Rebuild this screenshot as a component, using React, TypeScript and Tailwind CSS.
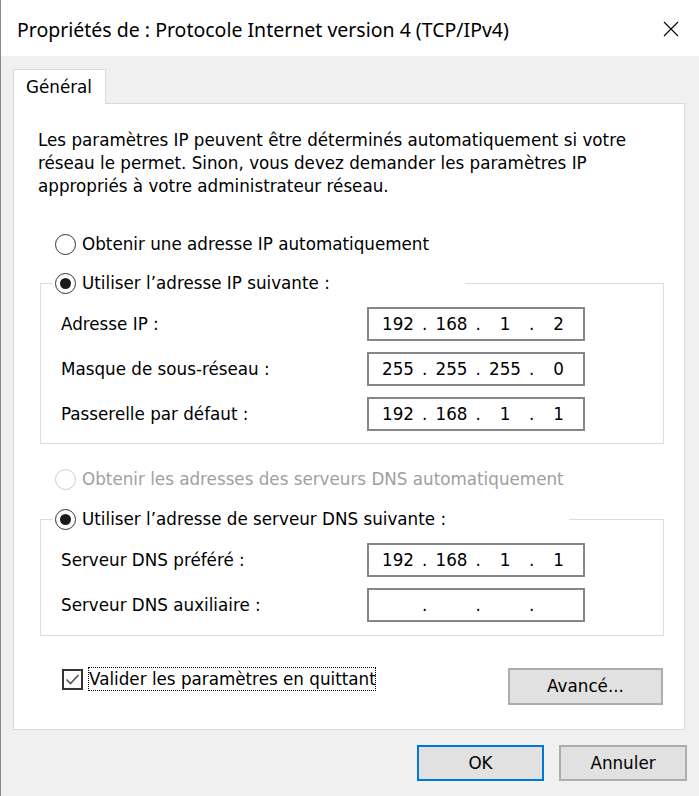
import React from 'react';

type RadioProps = { checked?: boolean; disabled?: boolean; label: string };

const Radio: React.FC<RadioProps> = ({ checked, disabled, label }) => (
  <div className="flex items-center h-[24px] gap-[6px]">
    <span
      className={`w-[21px] h-[21px] shrink-0 rounded-full border-[1.5px] bg-white flex items-center justify-center ${
        disabled ? 'border-[#cccccc]' : 'border-[#333333]'
      }`}
    >
      {checked && <span className="w-[11px] h-[11px] rounded-full bg-[#1a1a1a]" />}
    </span>
    <span className={`whitespace-nowrap pt-[1px] ${disabled ? 'text-[#a0a0a0]' : 'text-black'}`}>{label}</span>
  </div>
);

const IpBox: React.FC<{ parts: string[] }> = ({ parts }) => (
  <div className="w-[218px] h-[34px] border-2 border-[#868686] bg-white flex items-center pl-[9px]">
    {parts.map((p, i) => (
      <React.Fragment key={i}>
        {i > 0 && <span className="w-[13.5px] text-center">.</span>}
        <span className="w-[40px] text-center">{p}</span>
      </React.Fragment>
    ))}
  </div>
);

const Row: React.FC<{ label: string; parts: string[] }> = ({ label, parts }) => (
  <>
    <div className="flex items-center h-[34px] whitespace-nowrap">{label}</div>
    <IpBox parts={parts} />
  </>
);

export default function App() {
  return (
    <div className="w-[699px] h-[796px] bg-[#f0f0f0] border-l border-[#8a8a8a] flex flex-col font-['DejaVu_Sans',sans-serif] text-[16.75px] leading-[23px] text-black overflow-hidden">
      {/* title bar */}
      <div className="h-[56px] shrink-0 bg-white flex items-start justify-between">
        <div className="pl-[16px] pt-[18px] font-['Noto_Sans',sans-serif] text-[19.5px] leading-[24px] whitespace-nowrap">
          Propriétés de : Protocole Internet version 4 (TCP/IPv4)
        </div>
        <svg className="mt-[21px] mr-[20px]" width="16" height="16" viewBox="0 0 16 16">
          <path d="M1 1 L15 15 M15 1 L1 15" stroke="#000" strokeWidth="1.1" fill="none" />
        </svg>
      </div>

      {/* tab */}
      <div className="mt-[13px] ml-[12px] relative z-10 -mb-[1px] w-[93px] h-[35px] bg-white border border-b-0 border-[#d9d9d9] pl-[12px] leading-[34px]">
        Général
      </div>

      {/* panel */}
      <div className="ml-[12px] w-[672px] h-[627px] shrink-0 bg-white border border-[#d9d9d9] flex flex-col">
        <p className="mt-[25px] ml-[24px] whitespace-nowrap">
          Les paramètres IP peuvent être déterminés automatiquement si votre
          <br />
          réseau le permet. Sinon, vous devez demander les paramètres IP
          <br />
          appropriés à votre administrateur réseau.
        </p>

        <div className="mt-[34px] ml-[41px]">
          <Radio label="Obtenir une adresse IP automatiquement" />
        </div>

        <fieldset className="mt-[15px] ml-[26px] w-[624px] border border-[#dcdcdc]">
          <legend className="ml-[12px] pl-[2px] w-[412px]">
            <Radio checked label="Utiliser l’adresse IP suivante :" />
          </legend>
          <div className="grid grid-cols-[306px_218px] gap-y-[11px] pl-[20px] pt-[12px] pb-[12px]">
            <Row label="Adresse IP :" parts={['192', '168', '1', '2']} />
            <Row label="Masque de sous-réseau :" parts={['255', '255', '255', '0']} />
            <Row label="Passerelle par défaut :" parts={['192', '168', '1', '1']} />
          </div>
        </fieldset>

        <div className="mt-[23px] ml-[41px]">
          <Radio disabled label="Obtenir les adresses des serveurs DNS automatiquement" />
        </div>

        <fieldset className="mt-[16px] ml-[26px] w-[624px] border border-[#dcdcdc]">
          <legend className="ml-[12px] pl-[2px] w-[516px]">
            <Radio checked label="Utiliser l’adresse de serveur DNS suivante :" />
          </legend>
          <div className="grid grid-cols-[306px_218px] gap-y-[11px] pl-[20px] pt-[12px] pb-[13px]">
            <Row label="Serveur DNS préféré :" parts={['192', '168', '1', '1']} />
            <Row label="Serveur DNS auxiliaire :" parts={['', '', '', '']} />
          </div>
        </fieldset>

        <div className="mt-[31px] flex items-start justify-between">
          <div className="ml-[48px] flex items-center gap-[5px]">
            <span className="w-[21px] h-[21px] border-2 border-[#333333] bg-white flex items-center justify-center">
              <svg width="15" height="15" viewBox="0 0 15 15">
                <path d="M1.5 7.5 L5.5 11.5 L13.5 3" stroke="#555" strokeWidth="1.6" fill="none" />
              </svg>
            </span>
            <span className="w-[288px] h-[24px] border border-dotted border-black leading-[23px] whitespace-nowrap">
              Valider les paramètres en quittant
            </span>
          </div>
          <button className="mt-[1px] mr-[21px] w-[155px] h-[37px] bg-[#e1e1e1] border-2 border-[#adadad] text-black">
            Avancé...
          </button>
        </div>
      </div>

      {/* dialog buttons */}
      <div className="mt-[15px] pr-[12px] flex justify-end gap-[15px]">
        <button className="w-[127px] h-[36px] bg-[#e1e1e1] border-2 border-[#0078d7] text-black">OK</button>
        <button className="w-[128px] h-[36px] bg-[#e1e1e1] border-2 border-[#adadad] text-black">Annuler</button>
      </div>
    </div>
  );
}
